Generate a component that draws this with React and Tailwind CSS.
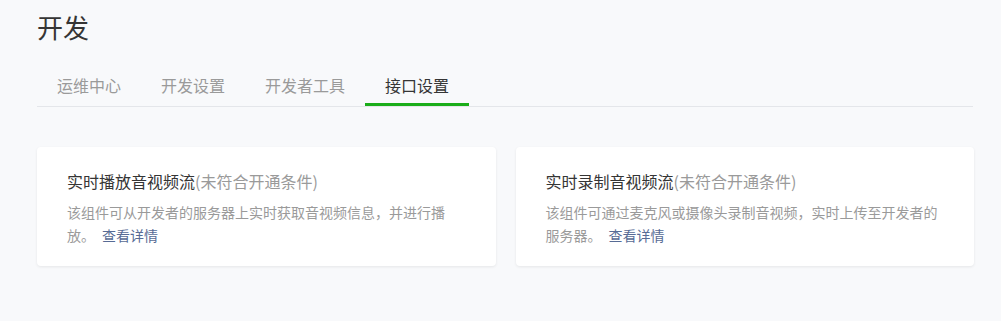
export default function App() {
  const font = { fontFamily: '"Noto Sans CJK SC", "Noto Sans", sans-serif' };
  const tabs = ["运维中心", "开发设置", "开发者工具", "接口设置"];
  const cards = [
    {
      title: "实时播放音视频流",
      desc: "该组件可从开发者的服务器上实时获取音视频信息，并进行播放。",
    },
    {
      title: "实时录制音视频流",
      desc: "该组件可通过麦克风或摄像头录制音视频，实时上传至开发者的服务器。",
    },
  ];
  return (
    <div className="w-[1001px] h-[321px] bg-[#f8f9fb] px-[37px] pt-[9px] overflow-hidden" style={font}>
      <div className="text-[26px] leading-[36px] text-[#353535]">开发</div>
      <div className="mt-[20px] w-[936px] flex border-b border-[#e4e6ea]">
        {tabs.map((t, i) => (
          <div
            key={t}
            className={
              "px-5 h-[41px] leading-[40px] text-[16px] " +
              (i === 3
                ? "text-[#353535] border-b-[3px] border-[#1aad19] -mb-[1px]"
                : "text-[#9a9a9a]")
            }
          >
            {t}
          </div>
        ))}
      </div>
      <div className="mt-10 flex gap-5 w-[937px]">
        {cards.map((c) => (
          <div
            key={c.title}
            className="flex-1 h-[119px] bg-white rounded-[4px] shadow-[0_1px_3px_rgba(0,0,0,0.08)] px-[30px] pt-[22px]"
          >
            <div className="text-[16px] leading-[24px] text-[#353535]">
              {c.title}
              <span className="text-[#9a9a9a]">(未符合开通条件)</span>
            </div>
            <div className="mt-[8px] text-[14px] leading-[23px] text-[#9a9a9a]">
              {c.desc}
              <span className="ml-[7px] text-[#576b95]">查看详情</span>
            </div>
          </div>
        ))}
      </div>
    </div>
  );
}
